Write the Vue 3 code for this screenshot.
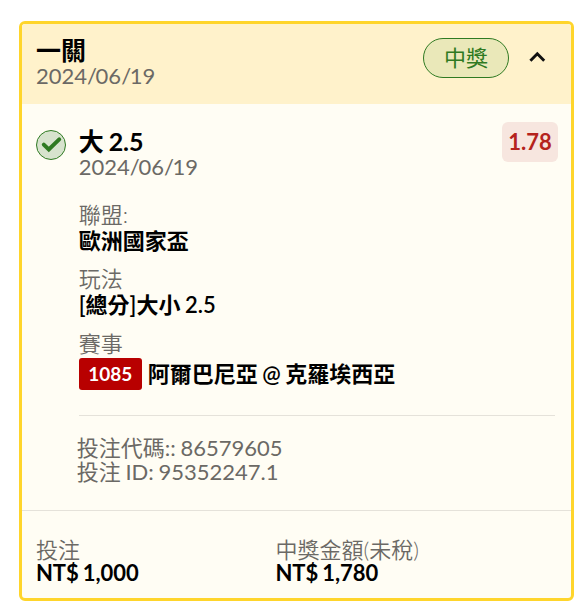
<script setup>
const date = ['2024', '06', '19']
const details = [
  { label: '聯盟:', value: '歐洲國家盃' },
  { label: '玩法', value: '[總分]大小 2.5' },
]
const totals = [
  { label: '投注', value: 'NT$ 1,000' },
  { label: '中獎金額(未稅)', value: 'NT$ 1,780' },
]
</script>

<template>
  <article class="card">
    <header class="head">
      <div class="head-text">
        <div class="title">一關</div>
        <div class="date">{{ date[0] }}<i>/</i>{{ date[1] }}<i>/</i>{{ date[2] }}</div>
      </div>
      <span class="status">中獎</span>
      <svg class="chevron" width="18" height="14" viewBox="0 0 18 14">
        <path d="M2.4 10.7 L9.3 3.8 L16.2 10.7" fill="none" stroke="#111" stroke-width="2.9" />
      </svg>
    </header>

    <section class="leg">
      <svg class="check" width="30" height="30" viewBox="0 0 30 30">
        <circle cx="15" cy="15" r="14.5" fill="#d7e3cd" stroke="#2f7a22" />
        <path d="M7.8 14.6 L12.8 19.4 L23.2 9.4" fill="none" stroke="#2f7a22" stroke-width="4" stroke-linecap="round" />
      </svg>
      <div class="leg-main">
        <div class="pick-row">
          <div>
            <div class="title">大 2.5</div>
            <div class="date">{{ date[0] }}<i>/</i>{{ date[1] }}<i>/</i>{{ date[2] }}</div>
          </div>
          <span class="odds">1.78</span>
        </div>
        <div v-for="d in details" :key="d.label" class="detail">
          <div class="label">{{ d.label }}</div>
          <div class="value">{{ d.value }}</div>
        </div>
        <div class="label match-label">賽事</div>
        <div class="match">
          <span class="code">1085</span>
          <span class="value">阿爾巴尼亞 @ 克羅埃西亞</span>
        </div>
        <div class="refs">
          <div>投注代碼:: 86579605</div>
          <div>投注 ID: 95352247.1</div>
        </div>
      </div>
    </section>

    <footer class="totals">
      <div v-for="t in totals" :key="t.label" class="total">
        <div class="label">{{ t.label }}</div>
        <div class="amount">{{ t.value }}</div>
      </div>
    </footer>
  </article>
</template>

<style>
body {
  background: #fff;
}
</style>

<style scoped>
.card {
  box-sizing: border-box;
  width: 555px;
  height: 580px;
  margin: 21px 0 0 19px;
  border: 3px solid #ffd52b;
  border-radius: 6px;
  background: #fffdf4;
  overflow: hidden;
  display: flex;
  flex-direction: column;
  font-family: Lato, "Noto Sans CJK TC", sans-serif;
  font-size: 22px;
  line-height: 26px;
  word-spacing: -1px;
  color: #000;
  white-space: nowrap;
}
.head {
  box-sizing: border-box;
  height: 80px;
  padding: 14px 25px 0 14px;
  display: flex;
  align-items: flex-start;
  background: #fff2cb;
}
.head-text {
  flex: 1;
}
.title {
  font-size: 25px;
  font-weight: 700;
  line-height: 25px;
  letter-spacing: -0.1px;
}
.date {
  color: #6b6965;
}
.date i {
  font-style: normal;
  letter-spacing: -1.4px;
}
.status {
  box-sizing: border-box;
  width: 86px;
  height: 40px;
  border: 1px solid #2f7a22;
  border-radius: 20px;
  background: #eae8b9;
  color: #2f7a22;
  text-align: center;
  line-height: 38px;
}
.chevron {
  margin: 12px 0 0 19px;
}
.leg {
  box-sizing: border-box;
  height: 406px;
  padding: 25px 13px 0 14px;
  display: flex;
  gap: 12.8px;
}
.check {
  flex: none;
  margin-top: 1px;
}
.leg-main {
  flex: 1;
}
.pick-row {
  display: flex;
  justify-content: space-between;
  align-items: flex-start;
  height: 73px;
}
.odds {
  width: 56px;
  height: 40px;
  margin-top: -7px;
  border-radius: 6px;
  background: #f7e6df;
  color: #b5231d;
  font-size: 22px;
  font-weight: 700;
  line-height: 40px;
  text-align: center;
}
.detail {
  height: 64px;
}
.label {
  color: #6b6965;
  font-weight: 350;
}
.match-label {
  margin-top: 1px;
}
.value {
  font-weight: 600;
}
.match {
  display: flex;
  align-items: center;
  height: 32px;
  gap: 6px;
  margin-top: 1px;
}
.code {
  width: 63px;
  height: 32px;
  border-radius: 3px;
  background: #b80000;
  color: #fff;
  font-size: 19px;
  font-weight: 700;
  line-height: 32px;
  text-align: center;
}
.refs {
  margin: 25px 3px 0 0;
  padding-top: 20px;
  border-top: 1px solid #e5e2da;
  color: #6b6965;
  line-height: 24px;
}
.refs div {
  margin-left: -2px;
}
.totals {
  flex: 1;
  display: flex;
  padding: 27px 14px 0;
  border-top: 1px solid #e5e2da;
}
.total {
  width: 239.5px;
}
.total .label {
  line-height: 24px;
}
.amount {
  font-weight: 700;
  line-height: 22px;
  letter-spacing: -0.1px;
}
</style>
